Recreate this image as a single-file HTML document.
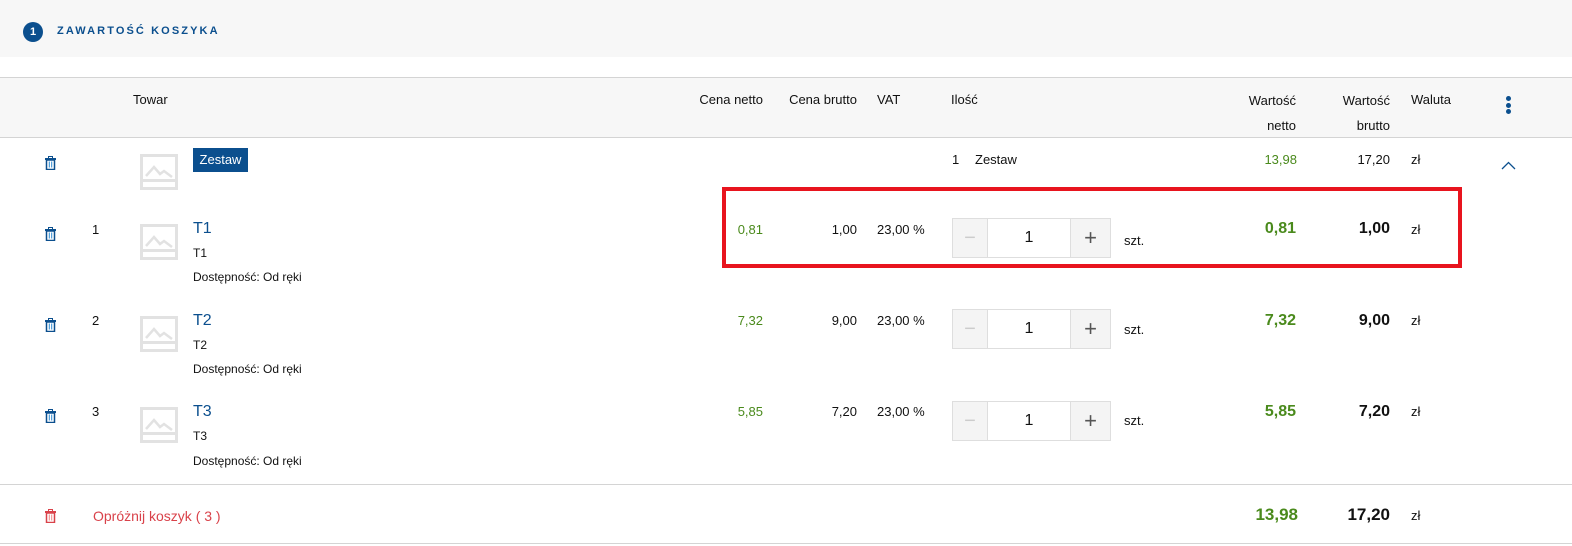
<!DOCTYPE html>
<html><head><meta charset="utf-8"><style>
*{margin:0;padding:0;box-sizing:border-box}
body{width:1572px;height:546px;background:#fff;font-family:"Liberation Sans",Arial,sans-serif;font-size:13px;color:#111;position:relative;overflow:hidden}
.a{position:absolute;white-space:nowrap;line-height:16px}
.r{position:absolute;white-space:nowrap;line-height:16px;text-align:right}
.g{color:#4a8a1c}
.b{font-weight:bold;font-size:16px;line-height:18px}
.blue{color:#0b4f8e}
.hl{position:absolute;left:0;width:1572px;height:1px;background:#d4d4d4}
.img{position:absolute;width:38px;height:36px;border:3px solid #e2e2e2}
.img:after{content:"";position:absolute;left:0;right:0;bottom:5px;height:3px;background:#e2e2e2}
.img svg{position:absolute;left:2px;top:5px}
.qty{position:absolute;left:952px;width:159px;height:40px;border:1px solid #dedede;display:flex}
.qty div{height:38px;display:flex;align-items:center;justify-content:center}
.qm{width:35px;background:#f4f4f4;border-right:1px solid #dedede;color:#ccc;font-size:20px}
.qi{flex:1;font-size:16px}
.qp{width:40px;background:#f4f4f4;border-left:1px solid #dedede;color:#555;font-size:22px;font-weight:300}
</style></head><body>
<div style="position:absolute;left:0;top:0;width:1572px;height:57px;background:#f7f7f7"></div>
<div style="position:absolute;left:23px;top:22px;width:20px;height:20px;border-radius:50%;background:#0b4f8e;color:#fff;font-weight:bold;font-size:11px;text-align:center;line-height:20px">1</div>
<div class="a blue" style="left:57px;top:23px;font-size:11px;font-weight:bold;letter-spacing:2.1px">ZAWARTOŚĆ KOSZYKA</div>

<div class="hl" style="top:77px"></div>
<div style="position:absolute;left:0;top:78px;width:1572px;height:59px;background:#f7f7f7"></div>
<div class="hl" style="top:137px"></div>
<div class="a" style="left:133px;top:92px">Towar</div>
<div class="r" style="right:809px;top:92px">Cena netto</div>
<div class="r" style="right:715px;top:92px">Cena brutto</div>
<div class="a" style="left:877px;top:92px">VAT</div>
<div class="a" style="left:951px;top:92px">Ilość</div>
<div class="r" style="right:276px;top:88px;line-height:25px">Wartość<br>netto</div>
<div class="r" style="right:182px;top:88px;line-height:25px">Wartość<br>brutto</div>
<div class="a" style="left:1411px;top:92px">Waluta</div>
<div style="position:absolute;left:1506px;top:96px;width:5px">
<div style="width:5px;height:5px;border-radius:50%;background:#0b4f8e;margin-bottom:1.5px"></div>
<div style="width:5px;height:5px;border-radius:50%;background:#0b4f8e;margin-bottom:1.5px"></div>
<div style="width:5px;height:5px;border-radius:50%;background:#0b4f8e"></div></div>

<!-- trash icons -->
<svg style="position:absolute;left:45px;top:156px" width="11" height="14" viewBox="0 0 11 14"><rect x="3.5" y="0.5" width="4" height="2" fill="none" stroke="#0b4f8e"/><rect x="0" y="2" width="11" height="2" fill="#0b4f8e"/><rect x="1.5" y="4" width="8" height="9.5" fill="none" stroke="#0b4f8e" stroke-width="1.5"/><path d="M4.3 5.5v6M6.7 5.5v6" stroke="#2a8ad4" stroke-width="1"/></svg>
<svg style="position:absolute;left:45px;top:227px" width="11" height="14" viewBox="0 0 11 14"><rect x="3.5" y="0.5" width="4" height="2" fill="none" stroke="#0b4f8e"/><rect x="0" y="2" width="11" height="2" fill="#0b4f8e"/><rect x="1.5" y="4" width="8" height="9.5" fill="none" stroke="#0b4f8e" stroke-width="1.5"/><path d="M4.3 5.5v6M6.7 5.5v6" stroke="#2a8ad4" stroke-width="1"/></svg>
<svg style="position:absolute;left:45px;top:318px" width="11" height="14" viewBox="0 0 11 14"><rect x="3.5" y="0.5" width="4" height="2" fill="none" stroke="#0b4f8e"/><rect x="0" y="2" width="11" height="2" fill="#0b4f8e"/><rect x="1.5" y="4" width="8" height="9.5" fill="none" stroke="#0b4f8e" stroke-width="1.5"/><path d="M4.3 5.5v6M6.7 5.5v6" stroke="#2a8ad4" stroke-width="1"/></svg>
<svg style="position:absolute;left:45px;top:409px" width="11" height="14" viewBox="0 0 11 14"><rect x="3.5" y="0.5" width="4" height="2" fill="none" stroke="#0b4f8e"/><rect x="0" y="2" width="11" height="2" fill="#0b4f8e"/><rect x="1.5" y="4" width="8" height="9.5" fill="none" stroke="#0b4f8e" stroke-width="1.5"/><path d="M4.3 5.5v6M6.7 5.5v6" stroke="#2a8ad4" stroke-width="1"/></svg>
<svg style="position:absolute;left:45px;top:509px" width="11" height="14" viewBox="0 0 11 14"><rect x="3.5" y="0.5" width="4" height="2" fill="none" stroke="#d9424a"/><rect x="0" y="2" width="11" height="2" fill="#d9424a"/><rect x="1.5" y="4" width="8" height="9.5" fill="none" stroke="#d9424a" stroke-width="1.5"/><path d="M4.3 5.5v6M6.7 5.5v6" stroke="#e88" stroke-width="1"/></svg>

<!-- images -->
<div class="img" style="left:140px;top:154px"><svg width="30" height="16"><path d="M1 14 L9 5 L15 12 L19 9 L27 15" fill="none" stroke="#e2e2e2" stroke-width="2.5"/></svg></div>
<div class="img" style="left:140px;top:224px"><svg width="30" height="16"><path d="M1 14 L9 5 L15 12 L19 9 L27 15" fill="none" stroke="#e2e2e2" stroke-width="2.5"/></svg></div>
<div class="img" style="left:140px;top:316px"><svg width="30" height="16"><path d="M1 14 L9 5 L15 12 L19 9 L27 15" fill="none" stroke="#e2e2e2" stroke-width="2.5"/></svg></div>
<div class="img" style="left:140px;top:407px"><svg width="30" height="16"><path d="M1 14 L9 5 L15 12 L19 9 L27 15" fill="none" stroke="#e2e2e2" stroke-width="2.5"/></svg></div>

<!-- Zestaw row -->
<div style="position:absolute;left:193px;top:148px;width:55px;height:24px;background:#0b4f8e;color:#fff;font-size:13px;line-height:24px;text-align:center">Zestaw</div>
<div class="a" style="left:952px;top:152px">1</div>
<div class="a" style="left:975px;top:152px">Zestaw</div>
<div class="r g" style="right:275px;top:152px">13,98</div>
<div class="r" style="right:182px;top:152px">17,20</div>
<div class="a" style="left:1411px;top:152px">zł</div>
<svg style="position:absolute;left:1501px;top:161px" width="15" height="9"><path d="M1 8 L7.5 1.5 L14 8" fill="none" stroke="#0b4f8e" stroke-width="1.3"/></svg>

<!-- rows -->
<div class="a" style="left:92px;top:222px">1</div>
<div class="a blue" style="left:193px;top:220px;font-size:16px;line-height:18px">T1</div>
<div class="a" style="left:193px;top:245px;font-size:12px">T1</div>
<div class="a" style="left:193px;top:269px;font-size:12px">Dostępność: Od ręki</div>
<div class="r g" style="right:809px;top:222px">0,81</div>
<div class="r" style="right:715px;top:222px">1,00</div>
<div class="a" style="left:877px;top:222px">23,00 %</div>
<div class="qty" style="top:218px"><div class="qm">−</div><div class="qi">1</div><div class="qp">+</div></div>
<div class="a" style="left:1124px;top:233px">szt.</div>
<div class="r g b" style="right:276px;top:220px">0,81</div>
<div class="r b" style="right:182px;top:220px">1,00</div>
<div class="a" style="left:1411px;top:222px">zł</div>

<div class="a" style="left:92px;top:313px">2</div>
<div class="a blue" style="left:193px;top:312px;font-size:16px;line-height:18px">T2</div>
<div class="a" style="left:193px;top:337px;font-size:12px">T2</div>
<div class="a" style="left:193px;top:361px;font-size:12px">Dostępność: Od ręki</div>
<div class="r g" style="right:809px;top:313px">7,32</div>
<div class="r" style="right:715px;top:313px">9,00</div>
<div class="a" style="left:877px;top:313px">23,00 %</div>
<div class="qty" style="top:309px"><div class="qm">−</div><div class="qi">1</div><div class="qp">+</div></div>
<div class="a" style="left:1124px;top:322px">szt.</div>
<div class="r g b" style="right:276px;top:312px">7,32</div>
<div class="r b" style="right:182px;top:312px">9,00</div>
<div class="a" style="left:1411px;top:313px">zł</div>

<div class="a" style="left:92px;top:404px">3</div>
<div class="a blue" style="left:193px;top:403px;font-size:16px;line-height:18px">T3</div>
<div class="a" style="left:193px;top:428px;font-size:12px">T3</div>
<div class="a" style="left:193px;top:453px;font-size:12px">Dostępność: Od ręki</div>
<div class="r g" style="right:809px;top:404px">5,85</div>
<div class="r" style="right:715px;top:404px">7,20</div>
<div class="a" style="left:877px;top:404px">23,00 %</div>
<div class="qty" style="top:401px"><div class="qm">−</div><div class="qi">1</div><div class="qp">+</div></div>
<div class="a" style="left:1124px;top:413px">szt.</div>
<div class="r g b" style="right:276px;top:403px">5,85</div>
<div class="r b" style="right:182px;top:403px">7,20</div>
<div class="a" style="left:1411px;top:404px">zł</div>

<div style="position:absolute;left:722px;top:187px;width:740px;height:81px;border:4px solid #e8141e"></div>

<div class="hl" style="top:484px"></div>
<div class="a" style="left:93px;top:508px;color:#d9424a;font-size:14px">Opróżnij koszyk ( 3 )</div>
<div class="r g b" style="right:274px;top:506px;font-size:17px">13,98</div>
<div class="r b" style="right:182px;top:506px;font-size:17px">17,20</div>
<div class="a" style="left:1411px;top:508px">zł</div>
<div class="hl" style="top:543px"></div>
</body></html>
